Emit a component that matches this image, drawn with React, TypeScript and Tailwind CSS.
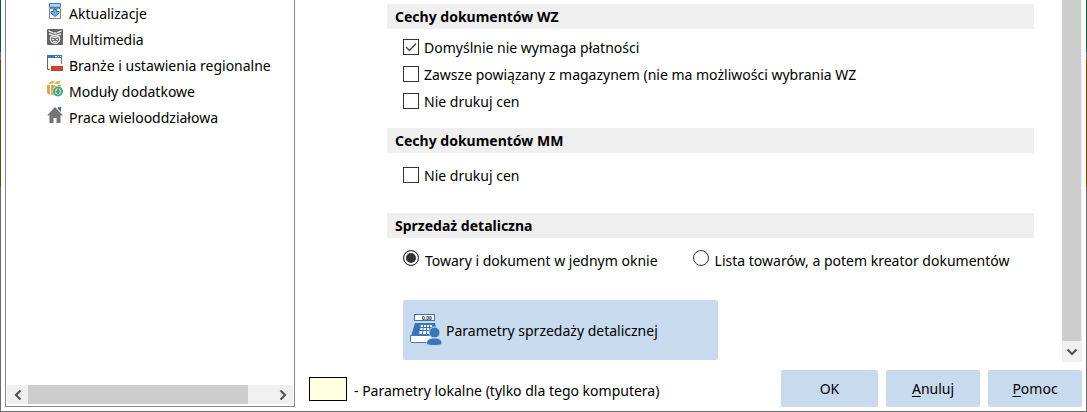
import { useState } from "react";
import type { ReactNode } from "react";

function UpdateIcon() {
  return (
    <svg viewBox="0 0 16 16" className="size-4" aria-hidden="true">
      <path d="M2.500.5h11v4h-11z" fill="#8fc0e6" stroke="#3f7fba" />
      <path d="M3 2h10" stroke="#cfe4f5" />
      <path d="M2.500 5.500h11v10h-11z" fill="#f1f1f1" stroke="#858585" />
      <path d="M6.500 6.500h3v2h2.500v1.500L8 13.500 4 10V8.500h2.500z" fill="#69b0e6" stroke="#2f74b5" />
    </svg>
  );
}

function MultimediaIcon() {
  return (
    <svg viewBox="0 0 16 16" className="size-4" aria-hidden="true">
      <rect width="16" height="16" rx="1" fill="#626262" />
      <path d="M1.500 2c2 0 2.500 1.500 4.500 1.500M14.500 2c-2 0-2.500 1.500-4.500 1.500M2 5c2 0 3 1.500 6 1.500s4-1.500 6-1.500M6.500 4h3" fill="none" stroke="#f4f4f4" strokeWidth="1.300" />
      <path d="M3.500 8c2-1 3 .5 4.500.5s2.500-1.500 4.500-.5c1 3-1 6.500-4.500 6.500S2.500 11 3.500 8z" fill="#777" stroke="#f4f4f4" strokeWidth="1.200" />
      <path d="M5 10.500h2M9 10.500h2M6 12.700h4" stroke="#f4f4f4" strokeWidth="1.200" />
    </svg>
  );
}

function RegionIcon() {
  return (
    <svg viewBox="0 0 16 16" className="size-4" aria-hidden="true">
      <path d="M.5 3v11.500H3" fill="none" stroke="#666" />
      <path d="M14.500 3v6" stroke="#777" />
      <path d="M0 0h15v3H0z" fill="#3a76b6" />
      <path d="M8 1h2v1H8zM11 1h1v1h-1zM13 1h1v1h-1z" fill="#fff" />
      <path d="M4 9h12v2H4z" fill="#f2f0f0" />
      <path d="M4 11h12v5H4z" fill="#c9452e" />
    </svg>
  );
}

function ModulesIcon() {
  return (
    <svg viewBox="0 0 16 16" className="size-4" aria-hidden="true">
      <path d="M0 4h3v10l-3-2zM4 4h10v10H4z" fill="#d5a84d" />
      <path d="M1 3l3-3h4L5 3zM7 3l3-3h4l-2 3z" fill="#ddb765" />
      <path d="M8 3l1 2 1-1 1 2" fill="none" stroke="#fff" />
      <circle cx="11" cy="10.500" r="5.500" fill="#fff" />
      <circle cx="11" cy="10.500" r="4" fill="#fff" stroke="#45a278" strokeWidth="2" />
      <path d="M11 8v5M8.500 10.500h5" stroke="#45a278" strokeWidth="2" />
    </svg>
  );
}

function HouseIcon() {
  return (
    <svg viewBox="0 0 16 16" className="size-4" aria-hidden="true">
      <path d="M11 0h3v5l-3-3z" fill="#3a76b6" />
      <path d="M8 0L0 8.500h2.500V16h4v-5h3v5h4V8.500H16z" fill="#747474" />
    </svg>
  );
}

function CashRegisterIcon() {
  return (
    <svg viewBox="0 0 32 32" className="size-8" aria-hidden="true">
      <rect x="4.500" y=".5" width="20" height="6" fill="#fff" stroke="#3a76b6" />
      <text x="12" y="5.500" fontSize="5" fontWeight="700" fill="#222" className="font-['Liberation_Sans']">0.00</text>
      <path d="M5 9h20l3 13H1z" fill="#3a76b6" />
      <path d="M.5 21.500h22v7H1.500l-1-1z" fill="#fff" stroke="#3a76b6" />
      <path d="M11 11h11l1 9H9z" fill="#fff" />
      <path d="M9 13.500h14M9 16.500h15M13.500 11l-1 9M16.500 11v9M19.500 11v9" stroke="#3a76b6" />
      <circle cx="24.500" cy="18.500" r="5.500" fill="#3a76b6" stroke="#c8daee" />
      <path d="M16.500 30c0-4 3-6 8-6s7.500 2 7.500 6c-1 2-14.500 2-15.500 0z" fill="#3a76b6" stroke="#c8daee" />
    </svg>
  );
}

const modules = [
  { label: "Aktualizacje", icon: <UpdateIcon /> },
  { label: "Multimedia", icon: <MultimediaIcon /> },
  { label: "Branże i ustawienia regionalne", icon: <RegionIcon /> },
  { label: "Moduły dodatkowe", icon: <ModulesIcon /> },
  { label: "Praca wielooddziałowa", icon: <HouseIcon /> },
];

function Chevron({ d }: { d: string }) {
  return (
    <svg viewBox="0 0 10 10" className="size-[10px]" aria-hidden="true">
      <path d={d} fill="none" stroke="#555" strokeWidth="2.200" />
    </svg>
  );
}

function WindowEdge({ top }: { top: "left" | "right" }) {
  return (
    <div className="flex w-px shrink-0 flex-col bg-[#6b6b6d]">
      <div className={top === "left" ? "h-[52px] bg-[#0f5268]" : "h-[52px] bg-[#19643f]"} />
      <div className="h-2" />
      <div className={top === "left" ? "h-[127px] bg-[#5f4a12]" : "h-[127px] bg-[#754508]"} />
    </div>
  );
}

function SectionHeading({ children }: { children: ReactNode }) {
  return <h2 className="h-[25px] bg-[#efefef] pl-2 text-sm leading-[26px] font-bold">{children}</h2>;
}

function Check({ label, defaultChecked = false }: { label: string; defaultChecked?: boolean }) {
  return (
    <label className="flex h-4 items-center gap-[5px] whitespace-nowrap">
      <span className="grid size-4 shrink-0">
        <input
          type="checkbox"
          defaultChecked={defaultChecked}
          className="peer col-start-1 row-start-1 size-4 appearance-none border border-[#333] bg-white"
        />
        <svg viewBox="0 0 16 16" className="pointer-events-none invisible col-start-1 row-start-1 size-4 peer-checked:visible" aria-hidden="true">
          <path d="M3 8l3.500 3.500L13 4.500" fill="none" stroke="#444" strokeWidth="1.300" />
        </svg>
      </span>
      <span className="pt-px">{label}</span>
    </label>
  );
}

function Choice({ label, checked, onSelect }: { label: string; checked: boolean; onSelect: () => void }) {
  return (
    <label className="flex items-start gap-[6px] whitespace-nowrap">
      <input
        type="radio"
        name="retail-mode"
        checked={checked}
        onChange={onSelect}
        className="size-4 shrink-0 appearance-none rounded-full border border-[#333] bg-white checked:bg-[#333] checked:ring-2 checked:ring-white checked:ring-inset"
      />
      <span className="pt-px">{label}</span>
    </label>
  );
}

export default function App() {
  const [mode, setMode] = useState(0);
  return (
    <div className="flex min-h-screen flex-col bg-white font-['Noto_Sans',sans-serif] text-sm leading-5 text-black">
      <div className="flex grow">
        <WindowEdge top="left" />
        <aside className="mb-1 ml-1 flex w-[290px] shrink-0 flex-col justify-between border border-t-0 border-[#828790] px-px pb-[2px]">
          <ul>
            {modules.map((m) => (
              <li key={m.label}>
                <a href="#" className="flex h-[26px] items-start gap-[6px] pt-[3px] pl-10 whitespace-nowrap">
                  {m.icon}
                  <span className="pt-px">{m.label}</span>
                </a>
              </li>
            ))}
          </ul>
          <div className="flex h-[19px] bg-[#f0f0f0]">
            <button type="button" aria-label="Przewiń w lewo" className="grid w-[21px] place-items-center">
              <Chevron d="M7.500 .5L3 5l4.500 4.500" />
            </button>
            <div className="mr-6 grow bg-[#cdcdcd]" />
            <button type="button" aria-label="Przewiń w prawo" className="grid w-[21px] place-items-center">
              <Chevron d="M2.500 .5L7 5 2.500 9.500" />
            </button>
          </div>
        </aside>

        <div className="flex grow flex-col pr-1">
          <div className="flex grow">
            <main className="grow pt-1 pr-7 pl-[92px]">
              <section>
                <SectionHeading>Cechy dokumentów WZ</SectionHeading>
                <div className="flex flex-col gap-[11px] pt-[10px] pl-4">
                  <Check label="Domyślnie nie wymaga płatności" defaultChecked />
                  <Check label="Zawsze powiązany z magazynem (nie ma możliwości wybrania WZ" />
                  <Check label="Nie drukuj cen" />
                </div>
              </section>
              <section className="pt-[19px]">
                <SectionHeading>Cechy dokumentów MM</SectionHeading>
                <div className="pt-[14px] pl-4">
                  <Check label="Nie drukuj cen" />
                </div>
              </section>
              <section className="pt-[30px]">
                <SectionHeading>Sprzedaż detaliczna</SectionHeading>
                <div className="flex gap-[35px] pt-3 pl-4">
                  <Choice label="Towary i dokument w jednym oknie" checked={mode === 0} onSelect={() => setMode(0)} />
                  <Choice label="Lista towarów, a potem kreator dokumentów" checked={mode === 1} onSelect={() => setMode(1)} />
                </div>
                <button type="button" className="mt-[29px] ml-4 flex h-[60px] w-[315px] items-center gap-1 rounded-xs bg-[#c8daee] pl-[7px]">
                  <CashRegisterIcon />
                  <span className="pt-[2px]">Parametry sprzedaży detalicznej</span>
                </button>
              </section>
            </main>
            <div className="flex w-5 shrink-0 flex-col bg-[#f0f0f0]">
              <div className="mr-px grow bg-[#cdcdcd]" />
              <button type="button" aria-label="Przewiń w dół" className="grid h-[21px] place-items-center">
                <Chevron d="M.5 2.500L5 7l4.500-4.500" />
              </button>
            </div>
          </div>
          <footer className="flex items-center gap-2 pt-2 pb-1 pl-[14px]">
            <div className="flex grow items-center gap-[7px]">
              <span className="h-6 w-[38px] border border-black bg-[#ffffe1]" />
              <span className="pt-[5px]">- Parametry lokalne (tylko dla tego komputera)</span>
            </div>
            <button type="button" className="h-[37px] w-[97px] rounded-xs bg-[#c8daee]">OK</button>
            <button type="button" className="h-[37px] w-[94px] rounded-xs bg-[#c8daee]"><span className="underline underline-offset-2">A</span>nuluj</button>
            <button type="button" className="h-[37px] w-[94px] rounded-xs bg-[#c8daee]"><span className="underline underline-offset-2">P</span>omoc</button>
          </footer>
        </div>
        <WindowEdge top="right" />
      </div>
      <div className="h-px bg-[#6b6b6d]" />
    </div>
  );
}
